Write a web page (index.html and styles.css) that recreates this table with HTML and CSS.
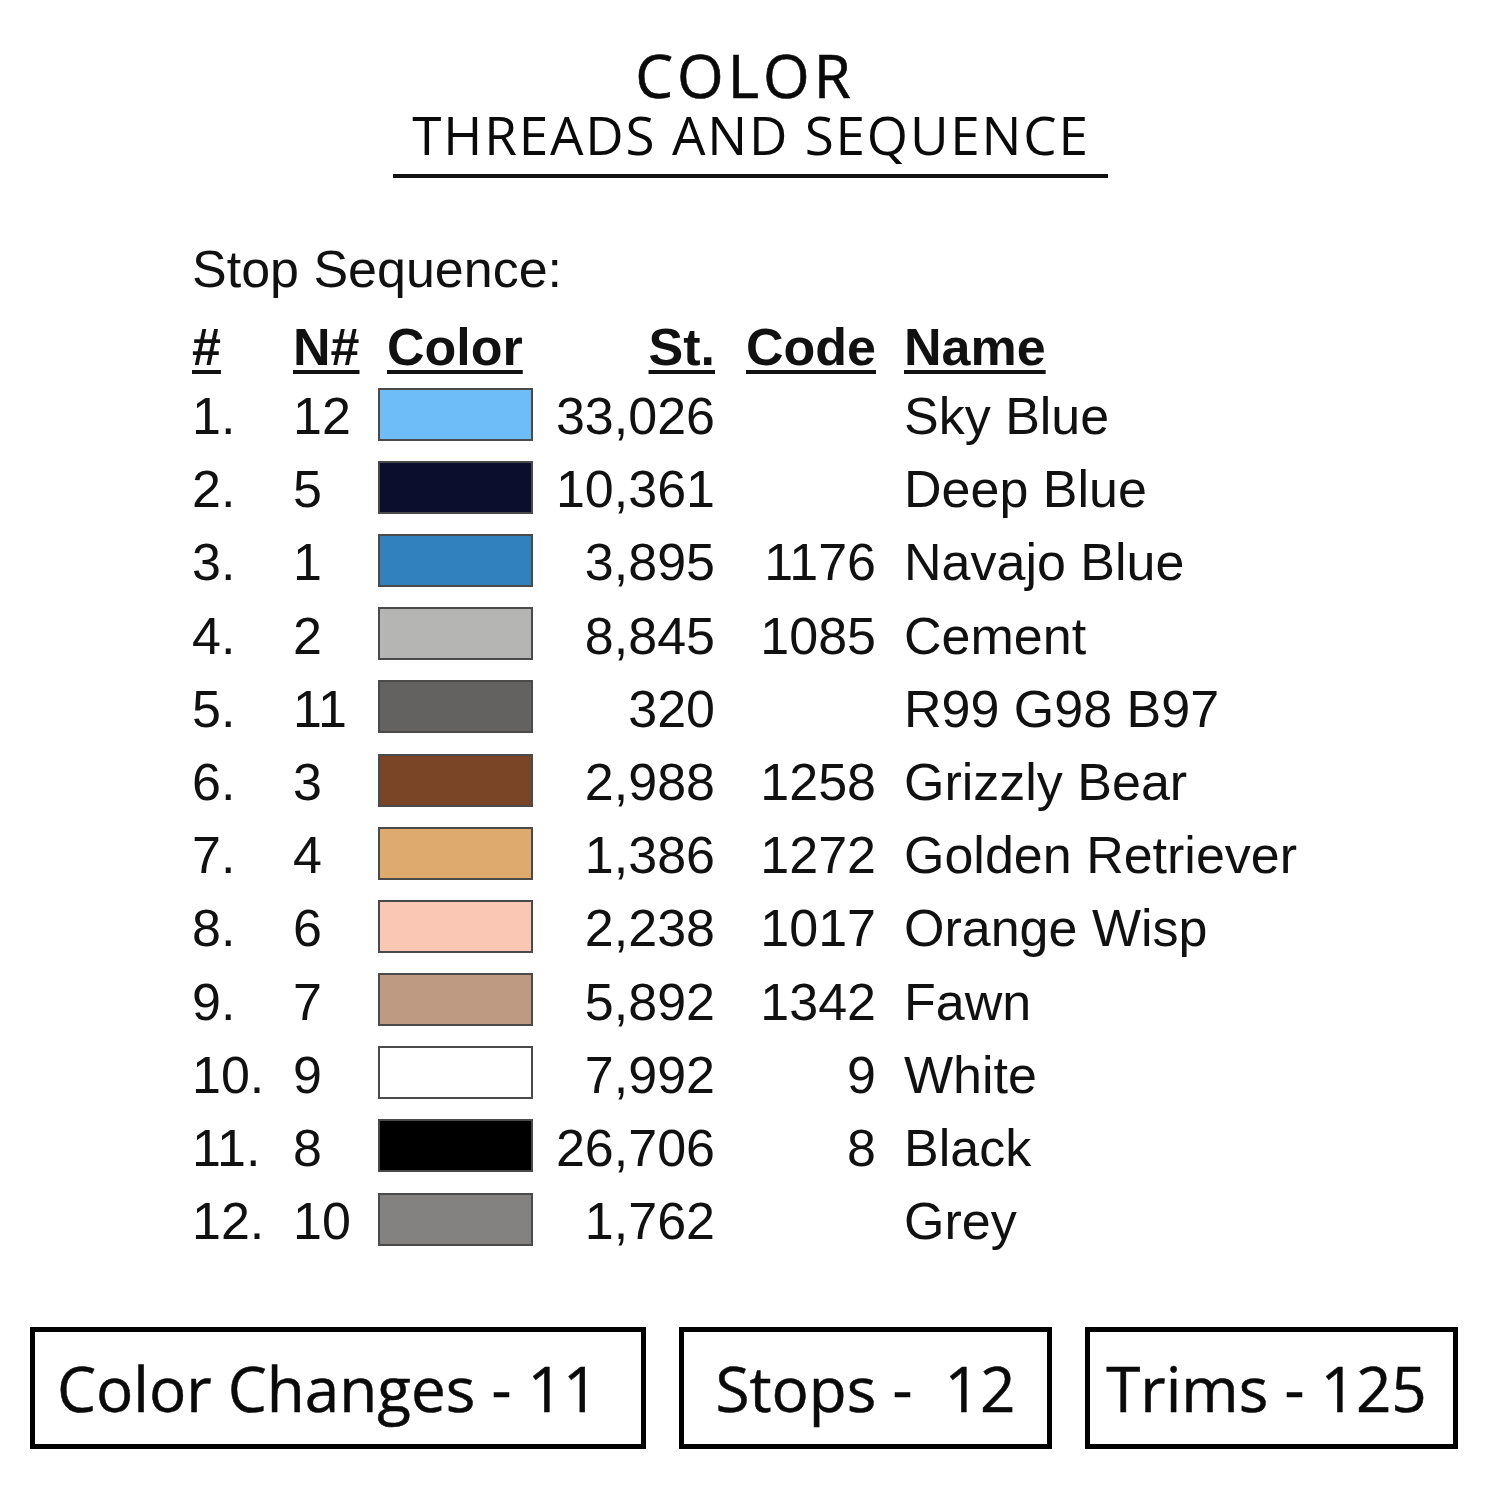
FILE: index.html
```html
<!DOCTYPE html>
<html lang="en">
<head>
<meta charset="utf-8">
<title>Color Threads and Sequence</title>
<link rel="stylesheet" href="styles.css">
</head>
<body>
<div class="page">
  <header class="title">
    <div class="t1">COLOR</div>
    <div class="t2">THREADS AND SEQUENCE</div>
  </header>

  <section class="seq">
    <div class="caption">Stop Sequence:</div>
    <div class="table">
      <div class="row head">
        <span class="c1"><u>#</u></span>
        <span class="c2"><u>N#</u></span>
        <span class="c3 hc"><u>Color</u></span>
        <span class="c4"><u>St.</u></span>
        <span class="c5"><u>Code</u></span>
        <span class="c6"><u>Name</u></span>
      </div>
      <div class="row"><span class="c1">1.</span><span class="c2">12</span><span class="c3"><i class="sw" style="background:#6ebdf8"></i></span><span class="c4">33,026</span><span class="c5"></span><span class="c6">Sky Blue</span></div>
      <div class="row"><span class="c1">2.</span><span class="c2">5</span><span class="c3"><i class="sw" style="background:#0c0e2e"></i></span><span class="c4">10,361</span><span class="c5"></span><span class="c6">Deep Blue</span></div>
      <div class="row"><span class="c1">3.</span><span class="c2">1</span><span class="c3"><i class="sw" style="background:#3281bf"></i></span><span class="c4">3,895</span><span class="c5">1176</span><span class="c6">Navajo Blue</span></div>
      <div class="row"><span class="c1">4.</span><span class="c2">2</span><span class="c3"><i class="sw" style="background:#b5b6b4"></i></span><span class="c4">8,845</span><span class="c5">1085</span><span class="c6">Cement</span></div>
      <div class="row"><span class="c1">5.</span><span class="c2">11</span><span class="c3"><i class="sw" style="background:#636260"></i></span><span class="c4">320</span><span class="c5"></span><span class="c6">R99 G98 B97</span></div>
      <div class="row"><span class="c1">6.</span><span class="c2">3</span><span class="c3"><i class="sw" style="background:#7a4526"></i></span><span class="c4">2,988</span><span class="c5">1258</span><span class="c6">Grizzly Bear</span></div>
      <div class="row"><span class="c1">7.</span><span class="c2">4</span><span class="c3"><i class="sw" style="background:#dfaa6d"></i></span><span class="c4">1,386</span><span class="c5">1272</span><span class="c6">Golden Retriever</span></div>
      <div class="row"><span class="c1">8.</span><span class="c2">6</span><span class="c3"><i class="sw" style="background:#fac7b5"></i></span><span class="c4">2,238</span><span class="c5">1017</span><span class="c6">Orange Wisp</span></div>
      <div class="row"><span class="c1">9.</span><span class="c2">7</span><span class="c3"><i class="sw" style="background:#bf9a82"></i></span><span class="c4">5,892</span><span class="c5">1342</span><span class="c6">Fawn</span></div>
      <div class="row"><span class="c1">10.</span><span class="c2">9</span><span class="c3"><i class="sw" style="background:#ffffff"></i></span><span class="c4">7,992</span><span class="c5">9</span><span class="c6">White</span></div>
      <div class="row"><span class="c1">11.</span><span class="c2">8</span><span class="c3"><i class="sw" style="background:#000000"></i></span><span class="c4">26,706</span><span class="c5">8</span><span class="c6">Black</span></div>
      <div class="row"><span class="c1">12.</span><span class="c2">10</span><span class="c3"><i class="sw" style="background:#838281"></i></span><span class="c4">1,762</span><span class="c5"></span><span class="c6">Grey</span></div>
    </div>
  </section>

  <footer class="stats">
    <div class="box b1">Color Changes - 11</div>
    <div class="box b2">Stops -&nbsp; 12</div>
    <div class="box b3">Trims - 125</div>
  </footer>
</div>
</body>
</html>
```

FILE: styles.css
```css
* { box-sizing: border-box; }
html, body { margin: 0; padding: 0; background: #fff; }
body { width: 1500px; height: 1500px; overflow: hidden; }

.page {
  display: flex;
  flex-direction: column;
  color: #111;
}

/* ---- title ---- */
.title {
  width: 715px;
  margin: 45px auto 0;
  text-align: center;
  font-family: "Open Sans", "Liberation Sans", sans-serif;
  color: #0a0a0a;
  border-bottom: 4px solid #111;
  padding-bottom: 9px;
}
.t1 {
  font-size: 60px;
  line-height: 60px;
  letter-spacing: 4px;
  padding-right: 10px;
  font-weight: 500;
  -webkit-text-stroke: 0.6px #0a0a0a;
}
.t2 {
  font-size: 53px;
  line-height: 60px;
  letter-spacing: 1.8px;
  padding-left: 2px;
}

/* ---- sequence table ---- */
.seq {
  font-family: "Liberation Sans", Arial, sans-serif;
  font-size: 52px;
  padding-left: 192px;
  margin-top: 55px;
}
.caption {
  line-height: 73px;
  height: 73px;
}
.table {
  margin-top: 5px;
  display: flex;
  flex-direction: column;
}
.row {
  display: grid;
  grid-template-columns: 101px 85px 155px 182px 161px auto;
  height: 73.2px;
  line-height: 73.2px;
  align-items: center;
  white-space: nowrap;
}
.row.head {
  height: 69px;
  line-height: 73px;
  font-weight: bold;
}
.row.head u {
  text-decoration-thickness: 4px;
  text-underline-offset: 5px;
}
.c4, .c5 { text-align: right; }
.c6 { padding-left: 28px; }
.hc { padding-left: 9px; }
.c3 { display: flex; align-items: center; height: 100%; }
.sw {
  display: block;
  width: 155px;
  height: 53px;
  margin-top: -5px;
  border: 2px solid #4a4a4a;
}

/* ---- stats boxes ---- */
.stats {
  display: flex;
  gap: 33px;
  margin-top: 69px;
  padding-left: 30px;
  font-family: "Open Sans", "Liberation Sans", sans-serif;
  font-size: 62px;
  color: #0a0a0a;
  -webkit-text-stroke: 0.5px #0a0a0a;
}
.box {
  height: 122px;
  border: 5px solid #000;
  display: flex;
  align-items: center;
  justify-content: center;
  white-space: nowrap;
}
.b1 { width: 616px; justify-content: flex-start; padding-left: 22px; }
.b2 { width: 373px; }
.b3 { width: 373px; padding-right: 10px; }
```
